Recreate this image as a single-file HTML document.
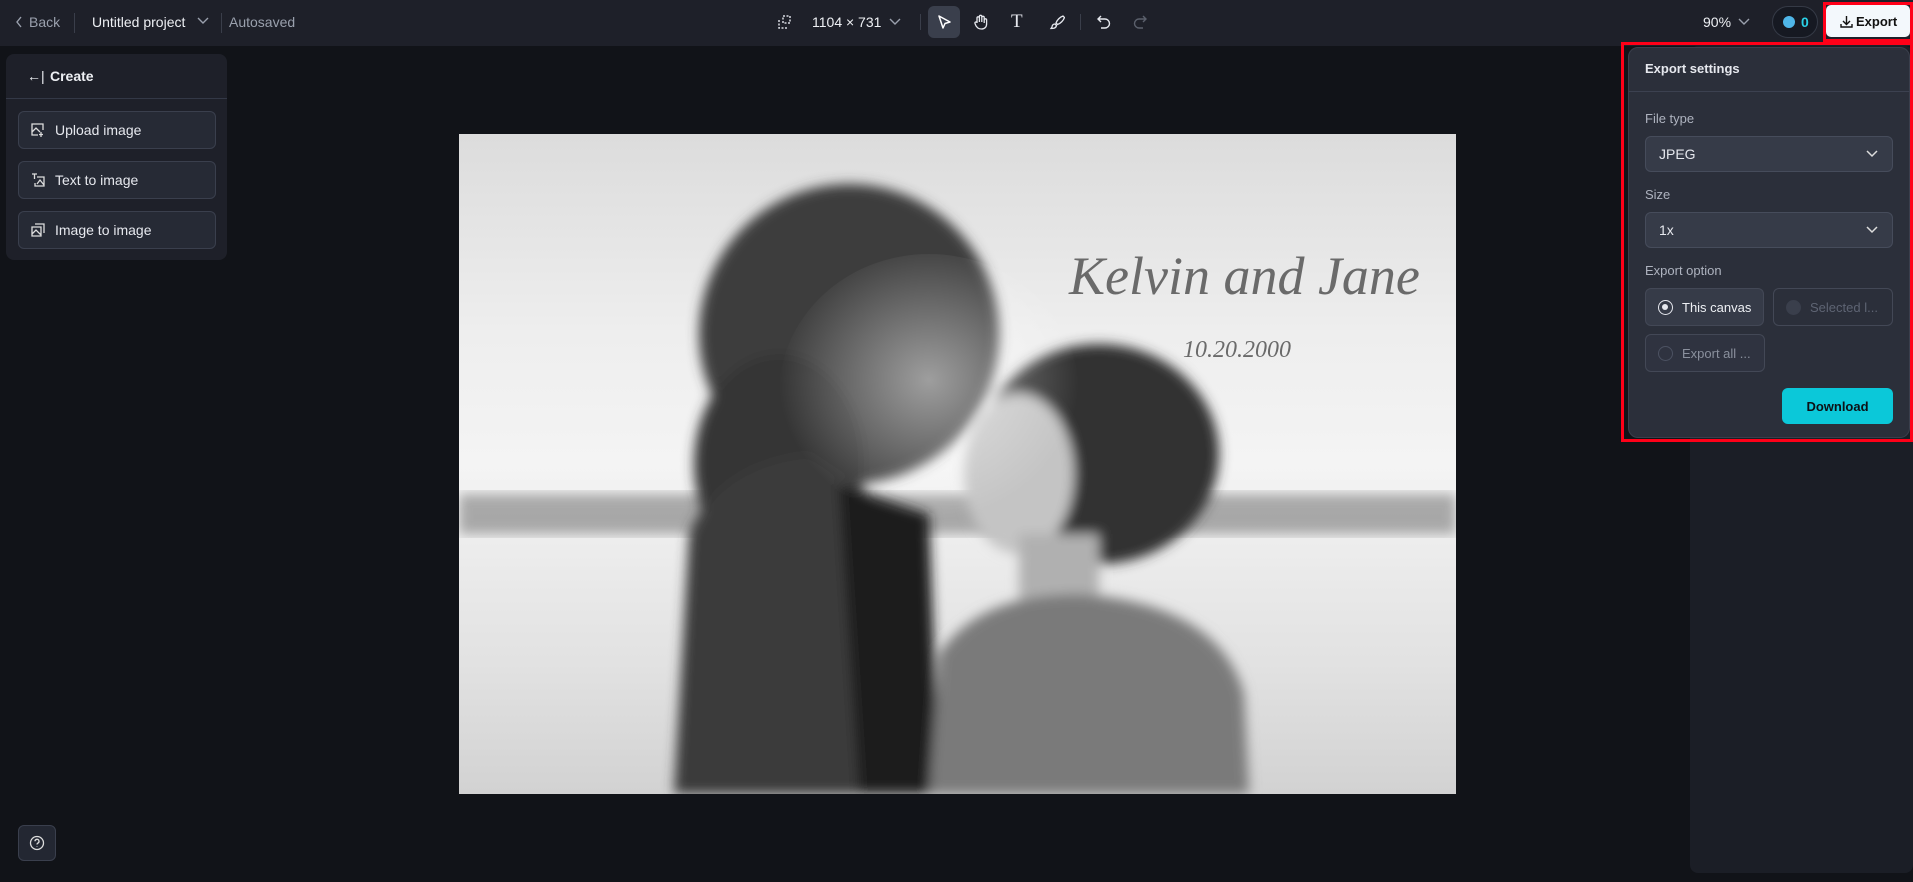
<!DOCTYPE html>
<html><head><meta charset="utf-8"><style>
*{box-sizing:border-box;margin:0;padding:0}
body{width:1913px;height:882px;background:#111318;font-family:"Liberation Sans",sans-serif;color:#e6e8ee;position:relative;overflow:hidden}
.top{position:absolute;left:0;top:0;width:1913px;height:46px;background:#1e2029}
.a{position:absolute}
.t{font-size:14px;line-height:1}
.btn{position:absolute;left:18px;width:198px;height:38px;border:1px solid #3a3f4d;border-radius:6px;background:#262a35;font-size:14px;display:flex;align-items:center;padding-left:36px;color:#e6e8ee}
.btn svg{position:absolute;left:12px;top:11px}
.sel{position:absolute;left:1645px;width:248px;height:36px;border:1px solid #464c5b;border-radius:6px;background:#363b48;font-size:14px;display:flex;align-items:center;padding-left:13px}
.sel svg{position:absolute;right:14px;top:13px}
.opt{position:absolute;height:38px;border:1px solid #434856;border-radius:6px;font-size:13px;display:flex;align-items:center;padding-left:36px}
.rad{position:absolute;left:12px;top:11px;width:15px;height:15px;border-radius:50%;border:1px solid #4c5262}
</style></head><body>
<div class="top"></div>
<svg class="a" style="left:15px;top:16px" width="8" height="12"><path d="M6 1L2 6l4 5" stroke="#9aa0ad" stroke-width="1.4" fill="none"/></svg>
<div class="a t" style="left:29px;top:15px;color:#9aa0ad">Back</div>
<div class="a" style="left:74px;top:13px;width:1px;height:20px;background:#3a3e4a"></div>
<div class="a t" style="left:92px;top:15px;color:#eef0f4">Untitled project</div>
<svg class="a" style="left:197px;top:17px" width="12" height="8"><path d="M1 1l5 5 5-5" stroke="#9aa0ad" stroke-width="1.4" fill="none"/></svg>
<div class="a" style="left:221px;top:13px;width:1px;height:20px;background:#3a3e4a"></div>
<div class="a t" style="left:229px;top:15px;color:#9aa0ad">Autosaved</div>
<svg class="a" style="left:778px;top:15px" width="14" height="14"><path d="M5 1h7v7H5z M1 5v8h8" stroke="#d8dbe2" stroke-width="1.5" fill="none" stroke-dasharray="2 1.5"/></svg>
<div class="a t" style="left:812px;top:15px;color:#eef0f4">1104 × 731</div>
<svg class="a" style="left:889px;top:18px" width="12" height="8"><path d="M1 1l5 5 5-5" stroke="#9aa0ad" stroke-width="1.4" fill="none"/></svg>
<div class="a" style="left:920px;top:14px;width:1px;height:16px;background:#3a3e4a"></div>
<div class="a" style="left:928px;top:6px;width:32px;height:32px;border-radius:6px;background:#3a3f4c"></div>
<svg class="a" style="left:937px;top:15px" width="14" height="14"><path d="M2 1l11 6-5 1.5L6 13z" stroke="#fff" stroke-width="1.5" fill="none" stroke-linejoin="round"/></svg>
<svg class="a" style="left:973px;top:14px" width="15" height="16"><path d="M4 9V4a1.2 1.2 0 012.4 0v4V2.5a1.2 1.2 0 012.4 0V8V3.5a1.2 1.2 0 012.4 0V9V6a1.2 1.2 0 012.4 0v4c0 3-2 5-5 5s-4-1-5.5-3L2 9.5a1.2 1.2 0 012-1.2z" stroke="#e6e8ee" stroke-width="1.3" fill="none"/></svg>
<div class="a" style="left:1011px;top:11px;font-family:'Liberation Serif',serif;font-size:19px;color:#e6e8ee">T</div>
<svg class="a" style="left:1049px;top:14px" width="16" height="16"><path d="M14 2c-3 1-6 4-7 7l1.5 1.5c3-1 6-4 7-7zM6 10c-2 0-3 1.5-3 3l-1 1.5c2 0 5 0 5.5-3z" stroke="#e6e8ee" stroke-width="1.3" fill="none"/></svg>
<div class="a" style="left:1080px;top:14px;width:1px;height:16px;background:#3a3e4a"></div>
<svg class="a" style="left:1096px;top:14px" width="16" height="16"><path d="M5 2L2 5l3 3M2 5h7a4.5 4.5 0 010 9H5" stroke="#e6e8ee" stroke-width="1.4" fill="none"/></svg>
<svg class="a" style="left:1132px;top:14px" width="16" height="16"><path d="M11 2l3 3-3 3M14 5H7a4.5 4.5 0 000 9h4" stroke="#5b606c" stroke-width="1.4" fill="none"/></svg>
<div class="a t" style="left:1703px;top:15px;color:#eef0f4">90%</div>
<svg class="a" style="left:1738px;top:18px" width="12" height="8"><path d="M1 1l5 5 5-5" stroke="#9aa0ad" stroke-width="1.4" fill="none"/></svg>
<div class="a" style="left:1772px;top:6px;width:46px;height:32px;border-radius:16px;border:1px solid #353a46;background:#161922"></div>
<div class="a" style="left:1783px;top:16px;width:12px;height:12px;border-radius:50%;background:#4fb6e8"></div>
<div class="a t" style="left:1801px;top:15px;color:#2ad0e6;font-weight:bold">0</div>
<div class="a" style="left:1823px;top:2px;width:90px;height:40px;border:3px solid #ff0018"></div>
<div class="a" style="left:1826px;top:5px;width:84px;height:32px;border-radius:5px;background:#f3f8fc"></div>
<svg class="a" style="left:1840px;top:15px" width="13" height="13"><path d="M6.5 1v8M3 6l3.5 3.5L10 6M1 9v3h11V9" stroke="#111" stroke-width="1.4" fill="none"/></svg>
<div class="a t" style="left:1856px;top:15px;color:#111;font-weight:bold;font-size:13px">Export</div>

<div class="a" style="left:6px;top:54px;width:221px;height:206px;border-radius:8px;background:#1e2029"></div>
<div class="a" style="left:6px;top:98px;width:221px;height:1px;background:#333846"></div>
<div class="a t" style="left:27px;top:69px;color:#eef0f4">←|</div>
<div class="a t" style="left:50px;top:69px;color:#eef0f4;font-weight:bold">Create</div>
<div class="btn" style="top:111px"><svg width="14" height="14"><path d="M12 7V1H1v11h6M1 9l4-4 4 4M10 9v5M8 11.5h4" stroke="#ddd" stroke-width="1.3" fill="none"/></svg>Upload image</div>
<div class="btn" style="top:161px"><svg width="14" height="14"><path d="M1 1h5M3.5 1v5M6 4h7v9H4v-3M6 11l3-4 4 5" stroke="#ddd" stroke-width="1.3" fill="none"/></svg>Text to image</div>
<div class="btn" style="top:211px"><svg width="14" height="14"><path d="M4 1h9v9M1 4h9v9H1zM1 11l4-4 5 5" stroke="#ddd" stroke-width="1.3" fill="none"/></svg>Image to image</div>
<div class="a" style="left:18px;top:825px;width:38px;height:36px;border-radius:6px;border:1px solid #3a3f4d;background:#232732"></div>
<svg class="a" style="left:29px;top:835px" width="16" height="16"><circle cx="8" cy="8" r="6.5" stroke="#ddd" stroke-width="1.3" fill="none"/><path d="M6 6.3a2 2 0 113 1.7c-.8.4-1 .8-1 1.5M8 11.3v.5" stroke="#ddd" stroke-width="1.3" fill="none"/></svg>

<div class="a" style="left:1690px;top:46px;width:223px;height:827px;border-radius:8px;background:#1b1e26"></div>

<svg class="a" style="left:459px;top:134px" width="997" height="660" viewBox="0 0 997 660">
<defs>
<linearGradient id="sky" x1="0" y1="0" x2="0" y2="1"><stop offset="0" stop-color="#dcdcdc"/><stop offset=".3" stop-color="#eeeeee"/><stop offset=".5" stop-color="#f4f4f4"/><stop offset=".8" stop-color="#e2e2e2"/><stop offset="1" stop-color="#d2d2d2"/></linearGradient>
<radialGradient id="glow" cx=".5" cy=".45" r=".5"><stop offset="0" stop-color="#fff" stop-opacity=".5"/><stop offset="1" stop-color="#fff" stop-opacity="0"/></radialGradient>
<filter id="b"><feGaussianBlur stdDeviation="6"/></filter>
</defs>
<rect width="997" height="660" fill="url(#sky)"/>
<rect x="0" y="360" width="997" height="40" fill="#8a8a8a" opacity=".7" filter="url(#b)"/>
<g filter="url(#b)">
<ellipse cx="390" cy="200" rx="150" ry="150" fill="#3e3e3e"/>
<ellipse cx="320" cy="330" rx="85" ry="110" fill="#353535"/>
<path d="M230 400 Q260 330 350 320 L470 400 L480 660 L215 660 Z" fill="#3b3b3b"/>
<path d="M380 350 L470 380 L480 660 L400 660 Z" fill="#1f1f1f"/>
<ellipse cx="640" cy="320" rx="120" ry="110" fill="#333"/>
<ellipse cx="560" cy="340" rx="55" ry="80" fill="#c4c4c4"/>
<rect x="560" y="400" width="80" height="80" fill="#b0b0b0"/>
<path d="M480 520 Q520 460 620 460 Q760 470 785 560 L790 660 L470 660 Z" fill="#7a7a7a"/>
</g>
<ellipse cx="470" cy="260" rx="150" ry="140" fill="url(#glow)"/>
<text x="610" y="160" font-family="Liberation Serif,serif" font-style="italic" font-size="54" fill="#6a6a6a">Kelvin and Jane</text>
<text x="724" y="223" font-family="Liberation Serif,serif" font-style="italic" font-size="24" fill="#6a6a6a">10.20.2000</text>
</svg>

<div class="a" style="left:1621px;top:42px;width:292px;height:400px;border:3px solid #ff0018"></div>
<div class="a" style="left:1628px;top:47px;width:282px;height:391px;border-radius:10px;background:#2b2f3a;border:1px solid #3a3f4c"></div>
<div class="a" style="left:1629px;top:91px;width:281px;height:1px;background:#3c4150"></div>
<div class="a t" style="left:1645px;top:62px;font-weight:bold;font-size:13px">Export settings</div>
<div class="a t" style="left:1645px;top:112px;color:#aeb3bf;font-size:13px">File type</div>
<div class="sel" style="top:136px">JPEG<svg width="12" height="8"><path d="M1 1l5 5 5-5" stroke="#ddd" stroke-width="1.5" fill="none"/></svg></div>
<div class="a t" style="left:1645px;top:188px;color:#aeb3bf;font-size:13px">Size</div>
<div class="sel" style="top:212px">1x<svg width="12" height="8"><path d="M1 1l5 5 5-5" stroke="#ddd" stroke-width="1.5" fill="none"/></svg></div>
<div class="a t" style="left:1645px;top:264px;color:#aeb3bf;font-size:13px">Export option</div>
<div class="opt" style="left:1645px;top:288px;width:119px;background:#363b48;color:#eef0f4"><div class="rad" style="border:1.5px solid #e6e8ee"><div style="position:absolute;left:3px;top:3px;width:6px;height:6px;border-radius:50%;background:#e6e8ee"></div></div>This canvas</div>
<div class="opt" style="left:1773px;top:288px;width:120px;color:#5e6473"><div class="rad" style="background:#3a3f4c;border-color:#3a3f4c"></div>Selected l...</div>
<div class="opt" style="left:1645px;top:334px;width:120px;color:#8a909d;background:#2f3340"><div class="rad"></div>Export all ...</div>
<div class="a" style="left:1782px;top:388px;width:111px;height:36px;border-radius:6px;background:#0bc8d9;color:#0c1116;font-weight:bold;font-size:13px;display:flex;align-items:center;justify-content:center">Download</div>
</body></html>
